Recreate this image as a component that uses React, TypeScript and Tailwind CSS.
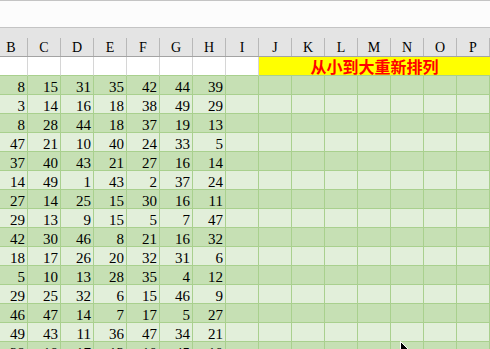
const columns = ['B', 'C', 'D', 'E', 'F', 'G', 'H', 'I', 'J', 'K', 'L', 'M', 'N', 'O', 'P'];

const rows: number[][] = [
  [8, 15, 31, 35, 42, 44, 39],
  [3, 14, 16, 18, 38, 49, 29],
  [8, 28, 44, 18, 37, 19, 13],
  [47, 21, 10, 40, 24, 33, 5],
  [37, 40, 43, 21, 27, 16, 14],
  [14, 49, 1, 43, 2, 37, 24],
  [27, 14, 25, 15, 30, 16, 11],
  [29, 13, 9, 15, 5, 7, 47],
  [42, 30, 46, 8, 21, 16, 32],
  [18, 17, 26, 20, 32, 31, 6],
  [5, 10, 13, 28, 35, 4, 12],
  [29, 25, 32, 6, 15, 46, 9],
  [46, 47, 14, 7, 17, 5, 27],
  [49, 43, 11, 36, 47, 34, 21],
  [29, 18, 17, 13, 10, 45, 10],
];

function Cursor() {
  return (
    <svg
      className="absolute left-[400px] top-[341px]"
      width="12"
      height="19"
      viewBox="0 0 12 19"
    >
      <path d="M0.5 0.5 L0.5 15.5 L4 12 L6.5 17.5 L8.5 16.5 L6 11 L11 11 Z" fill="#000" stroke="#fff" strokeWidth="1" />
    </svg>
  );
}

export default function App() {
  return (
    <div className="relative w-[490px] h-[349px] overflow-hidden bg-white">
      {/* formula bar strip */}
      <div className="h-[28px] border-t border-b border-[#c4c4c4] bg-[#fcfcfc]" />

      {/* column headers */}
      <div className="bg-[#e4e4e4]">
        <div className="h-[10px]" />
        <div className="flex -ml-[5px] h-[19px] border-b border-[#a3a3a3]">
          {columns.map((c) => (
            <div
              key={c}
              className="w-[33px] shrink-0 border-r border-[#b8b8b8] flex items-end justify-center pb-[1px] text-[14px] leading-[14px] text-black"
              style={{ fontFamily: '"Liberation Serif", serif' }}
            >
              {c}
            </div>
          ))}
        </div>
      </div>

      {/* title row */}
      <div className="flex -ml-[5px] h-[19px]">
        {columns.slice(0, 8).map((c) => (
          <div key={c} className="w-[33px] shrink-0 bg-white border-r border-[#d6d6d6] border-b border-b-[#a9d08e]" />
        ))}
        <div
          className="w-[231px] shrink-0 bg-[#ffff00] border-b border-[#a9d08e] flex items-center justify-center text-[16px] leading-[18px] font-bold text-[#ff0000]"
          style={{ fontFamily: '"Noto Sans CJK SC", sans-serif' }}
        >
          从小到大重新排列
        </div>
      </div>

      {/* data rows */}
      {rows.map((row, i) => (
        <div
          key={i}
          className={`flex -ml-[5px] h-[19px] ${i % 2 === 0 ? 'bg-[#c6e0b4]' : 'bg-[#e2efda]'}`}
        >
          {columns.map((c, j) => (
            <div
              key={c}
              className="w-[33px] shrink-0 border-r border-b border-[#a9d08e] text-right pr-[2px] pt-[4px] text-[15px] leading-[15px] text-black"
              style={{ fontFamily: '"Liberation Serif", serif' }}
            >
              {j < 7 ? row[j] : ''}
            </div>
          ))}
        </div>
      ))}

      <Cursor />
    </div>
  );
}
